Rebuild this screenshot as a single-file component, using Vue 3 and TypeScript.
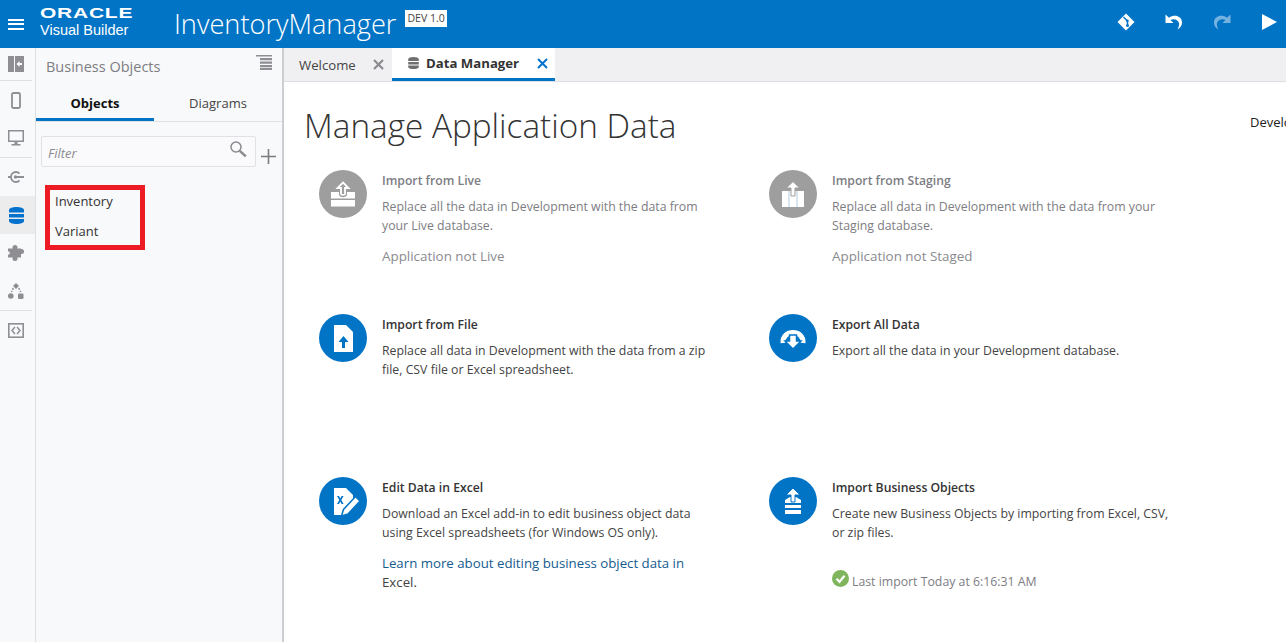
<script setup lang="ts">
interface Card {
  title: string
  lines: string[]
  icon: string
  disabled?: boolean
  note?: string
  link?: string[]
  status?: string
}

const cards: Card[] = [
  { title: 'Import from Live', lines: ['Replace all the data in Development with the data from', 'your Live database.'], icon: 'live', disabled: true, note: 'Application not Live' },
  { title: 'Import from Staging', lines: ['Replace all data in Development with the data from your', 'Staging database.'], icon: 'staging', disabled: true, note: 'Application not Staged' },
  { title: 'Import from File', lines: ['Replace all data in Development with the data from a zip', 'file, CSV file or Excel spreadsheet.'], icon: 'file' },
  { title: 'Export All Data', lines: ['Export all the data in your Development database.'], icon: 'export' },
  { title: 'Edit Data in Excel', lines: ['Download an Excel add-in to edit business object data', 'using Excel spreadsheets (for Windows OS only).'], icon: 'excel', link: ['Learn more about editing business object data in', 'Excel.'] },
  { title: 'Import Business Objects', lines: ['Create new Business Objects by importing from Excel, CSV,', 'or zip files.'], icon: 'bo', status: 'Last import Today at 6:16:31 AM' },
]
</script>

<template>
  <div class="app">
    <header class="topbar">
      <button class="burger" aria-label="Menu"><span></span><span></span><span></span></button>
      <div class="brand">
        <div class="oracle">ORACLE</div>
        <div class="vb">Visual Builder</div>
      </div>
      <div class="appname">InventoryManager</div>
      <div class="badge">DEV 1.0</div>
      <div class="actions">
        <svg width="20" height="20" viewBox="0 0 20 20"><path fill="#fff" d="M10 1.500 18.500 10 10 18.500 1.500 10z"/><path fill="none" stroke="#0274c6" stroke-width="1.500" d="M7.500 5l4 4v4"/><circle cx="11.500" cy="13.500" r="1.500" fill="#0274c6"/><circle cx="11.300" cy="8.800" r="1.400" fill="#0274c6"/></svg>
        <svg width="20" height="20" viewBox="0 0 20 20"><path fill="#fff" d="M1.500 2.500v8.500h8L6.500 8C9 6.300 14 7 15 11c.4 2-.3 4-1.500 6.500 3-1.500 4.800-4.500 4.500-7.500C17.500 4 10.500 1.800 5 5.800z"/></svg>
        <svg class="dim" width="20" height="20" viewBox="0 0 20 20"><path fill="#fff" d="M18.500 2.500v8.500h-8l3-3C11 6.300 6 7 5 11c-.4 2 .3 4 1.500 6.500-3-1.500-4.800-4.500-4.500-7.500C2.500 4 9.500 1.800 15 5.800z"/></svg>
        <svg width="18" height="20" viewBox="0 0 18 20"><path fill="#fff" d="M2 2 17 10 2 18z"/></svg>
      </div>
    </header>

    <div class="body">
      <nav class="rail">
        <div class="rail-item first">
          <svg width="16" height="16" viewBox="0 0 16 16"><path fill="#8e8e93" d="M0 0h6v16H0zM7 0h9v16H7z"/><path fill="#fff" d="M8.500 8l3-3v2h2.500v2h-2.500v2z"/></svg>
        </div>
        <div class="rail-item">
          <svg width="10" height="17" viewBox="0 0 10 17"><rect x="1" y="1" width="8" height="15" rx="1.500" fill="none" stroke="#8e8e93" stroke-width="1.800"/></svg>
        </div>
        <div class="rail-item sep">
          <svg width="16" height="16" viewBox="0 0 16 16"><path fill="#8e8e93" d="M0 0h16v12H0z"/><path fill="#f8f9fa" d="M1.500 1.500h13v9h-13z"/><path fill="#8e8e93" d="M6.500 12h3v2.500h-3zM3.500 14h9v1.500h-9z"/></svg>
        </div>
        <div class="rail-item">
          <svg width="16" height="14" viewBox="0 0 16 14"><path fill="none" stroke="#8e8e93" stroke-width="1.800" d="M11.500 3.500A5 5 0 1 0 11.500 10.500"/><path stroke="#8e8e93" stroke-width="1.800" d="M0 7h4M7 7h9"/><circle cx="7.500" cy="7" r="1.700" fill="#8e8e93"/></svg>
        </div>
        <div class="rail-item active">
          <svg width="15" height="17" viewBox="0 0 15 17"><path fill="#0572ce" d="M0 3c0-4 15-4 15 0v2.500H0zM0 7h15v3.500H0zM0 12h15v2c0 4-15 4-15 0z"/></svg>
        </div>
        <div class="rail-item">
          <svg width="16" height="16" viewBox="0 0 16 16"><g fill="#8e8e93"><rect x="0" y="3.500" width="13" height="9"/><circle cx="7" cy="2.500" r="2.500"/><circle cx="13.500" cy="6.500" r="2.500"/><circle cx="7" cy="13.500" r="2.500"/></g><circle cx="0" cy="8" r="1.800" fill="#f8f9fa"/></svg>
        </div>
        <div class="rail-item sep">
          <svg width="16" height="16" viewBox="0 0 16 16"><path fill="#8e8e93" d="M8 0l3 3-3 3-3-3z"/><circle cx="2.800" cy="13" r="2.800" fill="#8e8e93"/><rect x="10" y="10.500" width="5.500" height="5.500" rx="1" fill="#8e8e93"/><path stroke="#8e8e93" stroke-width="1.500" stroke-dasharray="2 1.300" fill="none" d="M5.300 5 3.500 9M10.700 5l2 4"/></svg>
        </div>
        <div class="rail-item">
          <svg width="16" height="15" viewBox="0 0 16 15"><rect x=".8" y=".8" width="14.400" height="13.400" fill="none" stroke="#8e8e93" stroke-width="1.600"/><path fill="none" stroke="#8e8e93" stroke-width="1.500" d="M7 4 4 7.500 7 11M9 4l3 3.500L9 11"/></svg>
        </div>
      </nav>

      <aside class="side">
        <div class="side-head">
          <span class="side-title">Business Objects</span>
          <svg class="side-menu" width="16" height="15" viewBox="0 0 16 15"><path fill="#8e8e93" d="M0 0h16v1.500H0zM4 3h12v2.300H4zM4 6.500h12v2.300H4zM4 10h12v2.300H4zM4 13h12v2H4z"/></svg>
        </div>
        <div class="side-tabs">
          <div class="side-tab on">Objects</div>
          <div class="side-tab">Diagrams</div>
        </div>
        <div class="filter-row">
          <div class="filter">
            <span>Filter</span>
            <svg width="18" height="18" viewBox="0 0 18 18"><circle cx="7" cy="7" r="5" fill="none" stroke="#8a8a8f" stroke-width="1.500"/><path stroke="#8a8a8f" stroke-width="2.500" d="M10.800 10.800l6 5.500"/></svg>
          </div>
          <svg class="plus" width="15" height="15" viewBox="0 0 15 15"><path fill="#7b7b80" d="M6.700 0h1.600v15H6.700zM0 6.700h15v1.600H0z"/></svg>
        </div>
        <div class="bo-list">
          <div class="bo-item">Inventory</div>
          <div class="bo-item">Variant</div>
        </div>
      </aside>

      <main class="main">
        <div class="tabs">
          <div class="tab welcome">
            <span>Welcome</span>
            <svg width="11" height="11" viewBox="0 0 11 11"><path stroke="#8a8a8f" stroke-width="2.200" d="M1 1l9 9M10 1l-9 9"/></svg>
          </div>
          <div class="tab current">
            <svg width="11" height="12" viewBox="0 0 15 17"><path fill="#6f6f6f" d="M0 3c0-4 15-4 15 0v2.500H0zM0 7h15v3.500H0zM0 12h15v2c0 4-15 4-15 0z"/></svg>
            <span>Data Manager</span>
            <svg class="x" width="11" height="11" viewBox="0 0 11 11"><path stroke="#0572ce" stroke-width="2" d="M1 1l9 9M10 1l-9 9"/></svg>
          </div>
        </div>
        <div class="content">
          <div class="title-row">
            <h1>Manage Application Data</h1>
            <span class="env">Development</span>
          </div>
          <div class="cards">
            <section v-for="c in cards" :key="c.title" class="card">
              <div class="disc" :class="{ grey: c.disabled }">
                <svg width="48" height="48" viewBox="0 0 48 48">
                  <template v-if="c.icon === 'live'">
                    <path fill="#fff" d="M12 22h8v2.500c0 3.500 8 3.500 8 0V22h8v6.500H12zM12 30h24v6.500H12z"/>
                    <path fill="none" stroke="#fff" stroke-width="1.800" d="M24 12.500l5.500 5.500h-3.500v6c0 1-4 1-4 0v-6h-3.500z"/>
                  </template>
                  <template v-else-if="c.icon === 'staging'">
                    <path fill="#fff" d="M13 21h22v16H13z"/>
                    <path stroke="#bcd4e6" stroke-width="1.200" d="M20 21v16M28 21v16"/>
                    <path fill="#fff" stroke="#9e9e9e" d="M24 11.500l6.500 6.500h-4.500v8h-4v-8h-4.500z"/>
                  </template>
                  <template v-else-if="c.icon === 'file'">
                    <path fill="#fff" d="M15 11h12l7 7v20H15z"/>
                    <path fill="#0274c6" d="M24.500 22l5 6h-3.500v6h-3v-6h-3.500z"/>
                  </template>
                  <template v-else-if="c.icon === 'export'">
                    <path fill="none" stroke="#fff" stroke-width="5" d="M14 29c-1-14 21-14 20 0"/>
                    <path fill="#fff" stroke="#0274c6" stroke-width="1.500" d="M20.500 21h7v6h4.500l-8 8-8-8h4.500z"/>
                  </template>
                  <template v-else-if="c.icon === 'excel'">
                    <path fill="#fff" d="M15 11h12l7 7v6l-9 10-1 4h-9z"/>
                    <path fill="#0274c6" d="M18 19h2l1.300 2.500L22.600 19h2l-2.300 4 2.300 4h-2l-1.300-2.500L20 27h-2l2.300-4z"/>
                    <path fill="#fff" stroke="#0274c6" stroke-width="1.500" d="M36.500 19.500l4.500 4.500-12 13-6.500 2 2-6.500z"/>
                  </template>
                  <template v-else>
                    <path fill="#fff" d="M16 23l5-3h6l5 3v3H16zM16 28h16v3H16zM16 33h16v4H16z"/>
                    <path fill="#fff" stroke="#0274c6" d="M24 11l7 7h-5v7h-4v-7h-5z"/>
                  </template>
                </svg>
              </div>
              <div class="text" :class="{ muted: c.disabled }">
                <h2>{{ c.title }}</h2>
                <p class="desc"><template v-for="l in c.lines" :key="l">{{ l }}<br /></template></p>
                <p v-if="c.note" class="note">{{ c.note }}</p>
                <p v-if="c.link" class="link"><a href="#" @click.prevent>{{ c.link[0] }}</a><br /><a href="#" class="tail" @click.prevent>{{ c.link[1] }}</a></p>
                <p v-if="c.status" class="status">
                  <svg width="17" height="17" viewBox="0 0 17 17"><circle cx="8.500" cy="8.500" r="8.500" fill="#7fb55c"/><path fill="none" stroke="#fff" stroke-width="2.200" d="M4.500 8.800l3 3 5-6"/></svg>
                  <span>{{ c.status }}</span>
                </p>
              </div>
            </section>
          </div>
        </div>
      </main>
    </div>
  </div>
</template>

<style>
html, body { margin: 0; background: #fff; overflow: hidden; }
</style>

<style scoped>
.app {
  width: 1286px;
  height: 642px;
  display: flex;
  flex-direction: column;
  overflow: hidden;
  font-family: "Open Sans", "Noto Sans", sans-serif;
  color: #333;
}
.topbar {
  height: 48px;
  flex: none;
  background: #0274c6;
  display: flex;
  align-items: center;
  color: #fff;
}
.burger {
  width: 16px;
  height: 11px;
  margin-left: 8px;
  padding: 0;
  border: 0;
  background: none;
  display: flex;
  flex-direction: column;
  justify-content: space-between;
}
.burger span { display: block; height: 2px; background: #fff; }
.brand { margin-left: 16px; width: 134px; margin-top: -4px; }
.oracle {
  font-family: "Liberation Sans", sans-serif;
  font-weight: 700;
  font-size: 14px;
  line-height: 14px;
  letter-spacing: .5px;
  transform: scaleX(1.500);
  transform-origin: left;
}
.vb {
  font-family: "Liberation Sans", sans-serif;
  font-size: 14.500px;
  line-height: 16px;
  margin-top: 2px;
}
.appname {
  font-size: 27.200px;
  font-weight: 300;
  line-height: 48px;
}
.badge {
  background: #fff;
  color: #444;
  font-size: 10.500px;
  line-height: 17px;
  padding: 0 2px;
  margin: -11px 0 0 9px;
}
.actions {
  margin-left: auto;
  display: flex;
  align-items: center;
  gap: 28px;
  padding-right: 8px;
  margin-top: -4px;
}
.dim { opacity: .45; }

.body { flex: 1; display: flex; min-height: 0; }
.rail {
  width: 36px;
  box-sizing: border-box;
  flex: none;
  background: #f8f9fa;
  border-right: 1px solid #dcdfe3;
  display: flex;
  flex-direction: column;
}
.rail-item {
  height: 38px;
  box-sizing: border-box;
  margin-right: 3px;
  display: flex;
  align-items: center;
  justify-content: center;
}
.rail-item.first { height: 33px; border-bottom: 1px solid #dcdfe3; }
.rail-item.sep { height: 39px; border-bottom: 1px solid #dcdfe3; }
.rail-item.active { background: #ececed; margin-right: 0; padding-right: 3px; }
.side {
  width: 248px;
  box-sizing: border-box;
  flex: none;
  background: #f8f9fa;
  border-right: 2px solid #ccced1;
}
.side-head {
  height: 37px;
  display: flex;
  align-items: center;
  padding: 0 10px;
  justify-content: space-between;
}
.side-title { font-size: 14.500px; color: #7d7d83; }
.side-menu { margin-top: -8px; }
.side-tabs {
  display: grid;
  grid-template-columns: 118px 128px;
  height: 36px;
  border-bottom: 1px solid #dfe1e4;
}
.side-tab {
  text-align: center;
  font-size: 13px;
  line-height: 36px;
  color: #444;
}
.side-tab.on { font-weight: 700; color: #111; border-bottom: 3px solid #0274c6; height: 33px; }
.filter-row { display: flex; align-items: flex-end; padding: 14px 0 0 5px; gap: 5px; }
.filter {
  width: 215px;
  height: 31px;
  box-sizing: border-box;
  border: 1px solid #dfe1e4;
  border-radius: 2px;
  background: #fafafc;
  display: flex;
  align-items: center;
  justify-content: space-between;
  padding: 2px 8px 0 6px;
  font-style: italic;
  font-size: 13px;
  color: #8a8a8f;
}
.filter svg { margin-top: -7px; }
.plus { margin-bottom: 3px; }
.bo-list {
  width: 90px;
  margin: 18px 0 0 9px;
  border: 5px solid #ed1c24;
  padding-bottom: 3px;
}
.bo-item { font-size: 13px; line-height: 22px; padding-left: 5px; color: #333; height: 22px; }
.bo-item + .bo-item { margin-top: 8px; }

.main { flex: 1; min-width: 0; display: flex; flex-direction: column; overflow: hidden; }
.tabs {
  height: 33px;
  flex: none;
  background: #f0f0f2;
  border-bottom: 1px solid #dcdfe3;
  display: flex;
}
.tab { display: flex; align-items: center; font-size: 13.200px; }
.welcome { width: 108px; padding: 0 8px 0 15px; box-sizing: border-box; justify-content: space-between; color: #444; }
.current {
  width: 163px;
  box-sizing: border-box;
  background: #fff;
  border-bottom: 3px solid #0274c6;
  height: 33px;
  padding: 0 7px 0 16px;
  font-weight: 700;
  color: #333;
  gap: 7px;
}
.current .x { margin-left: auto; }
.content { padding: 0 0 0 20px; flex: 1; min-width: 0; }
.title-row {
  display: grid;
  grid-template-columns: 946px 120px;
  align-items: start;
  height: 88px;
}
h1 {
  margin: 21px 0 0;
  font-weight: 300;
  font-size: 33.300px;
  line-height: 44px;
  color: #333;
  white-space: nowrap;
}
.env { margin-top: 31px; font-size: 13px; line-height: 18px; color: #222; white-space: nowrap; }
.cards {
  display: grid;
  grid-template-columns: 450px 450px;
  grid-template-rows: 144px 163px auto;
  padding-left: 15px;
}
.card { display: flex; gap: 15px; }
.disc {
  width: 48px;
  height: 48px;
  border-radius: 50%;
  background: #0274c6;
  flex: none;
}
.disc.grey { background: #9e9e9e; }
.text { margin-top: 1px; width: 345px; }
h2 {
  margin: 0;
  font-size: 12.200px;
  line-height: 20px;
  font-weight: 600;
  color: #333;
}
.muted h2 { color: #7d7d83; }
.desc {
  margin: 7px 0 0;
  font-size: 12.300px;
  line-height: 18.600px;
  color: #444;
  white-space: nowrap;
}
.muted .desc { color: #7d7d83; }
.note { margin: 11px 0 0; font-size: 13.400px; line-height: 20px; color: #8a8a8f; }
.link { margin: 12px 0 0; font-size: 13.250px; line-height: 19px; white-space: nowrap; }
.link a { color: #145c8f; text-decoration: none; }
.link a.tail { color: #444; }
.status {
  margin: 29px 0 0;
  display: flex;
  align-items: flex-start;
  gap: 3px;
  font-size: 12.300px;
  line-height: 20px;
  color: #7d7d83;
}
.status svg { margin-top: -1px; }
.status span { margin-top: 1px; }
</style>
